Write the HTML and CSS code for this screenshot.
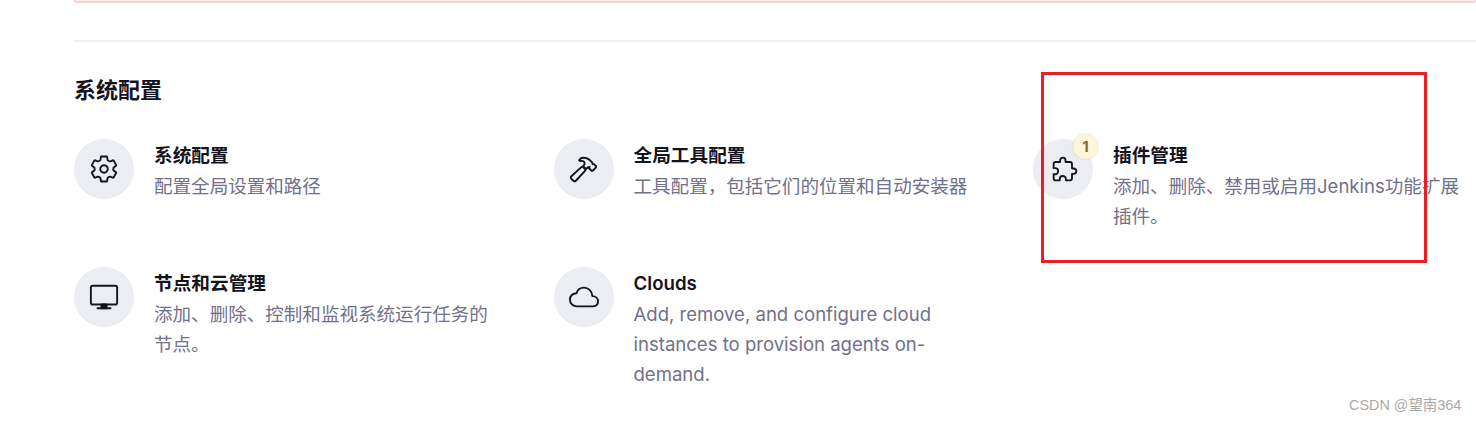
FILE: index.html
```html
<!DOCTYPE html>
<html lang="zh-CN">
<head>
  <meta charset="UTF-8" />
  <meta name="viewport" content="width=device-width, initial-scale=1" />
  <title>系统管理</title>
  <link rel="stylesheet" href="styles.css">
</head>
<body>

  <main class="page">
    <div class="alert"></div>
    <div class="divider"></div>

    <h2 class="section-title">系统配置</h2>

    <div class="manage-grid">
      <a class="manage-item" href="#">
        <div class="manage-icon">
          <svg viewBox="0 0 512 512"><path d="M262.29 192.31a64 64 0 1057.4 57.4 64.13 64.13 0 00-57.4-57.4zM416.39 256a154.34 154.34 0 01-1.53 20.79l45.21 35.46a10.81 10.81 0 012.45 13.75l-42.77 74a10.81 10.81 0 01-13.14 4.59l-44.9-18.08a16.11 16.11 0 00-15.17 1.75A164.48 164.48 0 01325 400.8a15.94 15.94 0 00-8.82 12.14l-6.73 47.89a11.08 11.08 0 01-10.68 9.17h-85.54a11.11 11.11 0 01-10.69-8.87l-6.72-47.82a16.07 16.07 0 00-9-12.22 155.3 155.3 0 01-21.46-12.57 16 16 0 00-15.11-1.71l-44.89 18.07a10.81 10.81 0 01-13.14-4.58l-42.77-74a10.8 10.8 0 012.45-13.75l38.21-30a16.05 16.05 0 006-14.08c-.36-4.17-.58-8.33-.58-12.5s.21-8.27.58-12.35a16 16 0 00-6.07-13.94l-38.19-30A10.81 10.81 0 0149.48 186l42.77-74a10.81 10.81 0 0113.14-4.59l44.9 18.08a16.11 16.11 0 0015.17-1.75A164.48 164.48 0 01187 111.2a15.94 15.94 0 008.82-12.14l6.73-47.89A11.08 11.08 0 01213.23 42h85.54a11.11 11.11 0 0110.69 8.87l6.72 47.82a16.07 16.07 0 009 12.22 155.3 155.3 0 0121.46 12.57 16 16 0 0015.11 1.71l44.89-18.07a10.81 10.81 0 0113.14 4.58l42.77 74a10.8 10.8 0 01-2.45 13.75l-38.21 30a16.05 16.05 0 00-6.05 14.08c.33 4.14.55 8.3.55 12.47z"/></svg>
        </div>
        <div class="manage-text">
          <h3>系统配置</h3>
          <p>配置全局设置和路径</p>
        </div>
      </a>

      <a class="manage-item" href="#">
        <div class="manage-icon">
          <svg class="icon-hammer" viewBox="0 0 512 512"><path d="M280.16 242.79l-26.11-26.12a32 32 0 00-45.14-.12L27.38 384.08c-6.61 6.23-10.95 14.17-11.35 23.06a32.11 32.11 0 009.21 23.94l39 39.43a.46.46 0 00.07.07A32.29 32.29 0 0087 480h1.18c8.89-.33 16.85-4.5 23.17-11.17l169-181.44a32 32 0 00-.19-44.6z"/><path d="M490 190l-.31-.31-34.27-33.92a21.46 21.46 0 00-15.28-6.26 21.89 21.89 0 00-12.79 4.14c0-.43.06-.85.09-1.22.45-6.5 1.15-16.32-5.2-25.22a258 258 0 00-24.8-28.74.6.6 0 00-.08-.08c-13.32-13.12-42.31-37.83-86.72-55.94A139.55 139.55 0 00257.56 32C226 32 202 46.24 192.81 54.68a119.92 119.92 0 00-14.18 16.22 16 16 0 0018.65 24.34 74.45 74.45 0 018.58-2.63 63.46 63.46 0 0118.45-1.15c13.19 1.09 28.79 7.64 35.69 13.09 11.7 9.41 17.33 22.09 18.26 41.09.18 3.82-7.72 18.14-20 34.48a16 16 0 001.45 21l34.41 34.41a16 16 0 0022 .62c9.73-8.69 24.55-21.79 29.73-25 7.69-4.73 13.19-5.64 14.7-5.8a19.18 19.18 0 0111.29 2.38 1.24 1.24 0 01-.31.95l-1.82 1.73-.3.28a21.52 21.52 0 00.05 30.54l34.26 33.91a21.45 21.45 0 0015.28 6.25 21.7 21.7 0 0015.22-6.2l55.5-54.82c.19-.19.38-.39.56-.59A21.87 21.87 0 00490 190z"/></svg>
        </div>
        <div class="manage-text">
          <h3>全局工具配置</h3>
          <p>工具配置，包括它们的位置和自动安装器</p>
        </div>
      </a>

      <a class="manage-item" href="#">
        <div class="manage-icon">
          <svg class="icon-puzzle" viewBox="0 0 512 512"><path d="M413.66 246.1H386a2 2 0 01-2-2v-77.24A38.86 38.86 0 00345.14 128H267.9a2 2 0 01-2-2V98.34c0-27.14-21.5-49.86-48.64-50.33a49.53 49.53 0 00-50.4 49.51V126a2 2 0 01-2 2H87.62A39.74 39.74 0 0048 167.62V238a2 2 0 002 2h26.91c29.37 0 53.68 25.48 54.09 54.85.42 29.87-23.51 57.15-53.29 57.15H50a2 2 0 00-2 2v70.38A39.74 39.74 0 0087.62 464H158a2 2 0 002-2v-20.93c0-30.28 24.75-56.35 55-57.06 30.1-.7 57 20.31 57 50.28V462a2 2 0 002 2h71.14A38.86 38.86 0 00384 425.14v-78a2 2 0 012-2h28.48c27.63 0 49.52-22.67 49.52-50.4s-23.2-48.64-50.34-48.64z"/></svg>
          <span class="badge">1</span>
        </div>
        <div class="manage-text">
          <h3>插件管理</h3>
          <p>添加、删除、禁用或启用Jenkins功能扩展插件。</p>
        </div>
      </a>

      <a class="manage-item" href="#">
        <div class="manage-icon">
          <svg viewBox="0 0 512 512"><rect x="32" y="64" width="448" height="320" rx="32" ry="32"/><path class="solid" d="M304 448l-8-64h-80l-8 64h96z"/><path d="M368 448H144"/></svg>
        </div>
        <div class="manage-text">
          <h3>节点和云管理</h3>
          <p>添加、删除、控制和监视系统运行任务的节点。</p>
        </div>
      </a>

      <a class="manage-item" href="#">
        <div class="manage-icon">
          <svg viewBox="0 0 512 512"><path d="M400 240c-8.89-89.54-71-144-144-144-69 0-113.44 48.2-128 96C68 198 16 235.59 16 304c0 66 54 112 120 112h260c55 0 100-27.44 100-88 0-59.82-53-85.76-96-88z"/></svg>
        </div>
        <div class="manage-text">
          <h3>Clouds</h3>
          <p>Add, remove, and configure cloud instances to provision agents on-demand.</p>
        </div>
      </a>
    </div>
  </main>

  <!-- annotation drawn over the screenshot -->
  <div class="red-box"></div>
  <div class="watermark">CSDN @望南364</div>

</body>
</html>
```

FILE: styles.css
```css
html, body {
  margin: 0;
  height: 421px;
  overflow: hidden;
  background: #fff;
}
body {
  position: relative;
  font-family: Inter, "Noto Sans CJK SC", sans-serif;
  color: #14141f;
}
.page {
  padding-left: 74px;
}
.alert {
  height: 1px;
  background: #fdeef0;
  border: 2px solid #f6d3d7;
  border-top: none;
  border-radius: 0 0 10px 10px;
}
.divider {
  height: 2px;
  margin-top: 37px;
  background: #f1f1f4;
}
.section-title {
  margin: 31px 0;
  font-size: 22px;
  line-height: 35px;
  font-weight: 600;
}
.manage-grid {
  display: grid;
  grid-template-columns: repeat(3, 479.5px);
  row-gap: 36px;
}
.manage-item {
  display: flex;
  gap: 20px;
  color: inherit;
  text-decoration: none;
}
.manage-icon {
  position: relative;
  flex: none;
  display: flex;
  align-items: center;
  justify-content: center;
  width: 60px;
  height: 60px;
  border-radius: 50%;
  background: #ecedf3;
}
.manage-icon svg {
  width: 30px;
  height: 30px;
  fill: none;
  stroke: #14141f;
  stroke-width: 32;
  stroke-linecap: round;
  stroke-linejoin: round;
}
.manage-icon svg .solid {
  fill: #14141f;
}
.manage-icon .icon-hammer {
  width: 27px;
  height: 27px;
  stroke-width: 36;
}
.manage-icon .icon-puzzle {
  width: 28px;
  height: 28px;
  margin-left: 4px;
  stroke-width: 34;
}
.badge {
  position: absolute;
  top: -5px;
  right: -5px;
  width: 25px;
  height: 25px;
  border-radius: 50%;
  background: #fdf6dd;
  box-shadow: 0 0 2px rgba(160, 130, 60, 0.35);
  color: #8a6b32;
  font-size: 15px;
  font-weight: 700;
  line-height: 25px;
  text-align: center;
}
.manage-text {
  width: 348px;
}
.manage-text h3 {
  margin: 2px 0 0;
  font-size: 18.67px;
  line-height: 30px;
  font-weight: 600;
}
.manage-text p {
  margin: 0;
  font-size: 18.56px;
  line-height: 30px;
  color: #72708a;
}
.red-box {
  position: absolute;
  left: 1041px;
  top: 72px;
  width: 380px;
  height: 185px;
  border: 3px solid #ee1c25;
}
.watermark {
  position: absolute;
  left: 1349px;
  top: 396px;
  font-family: "Liberation Sans", "Noto Sans CJK SC", sans-serif;
  font-size: 14.4px;
  line-height: 18px;
  color: #aaaaaa;
}
```
